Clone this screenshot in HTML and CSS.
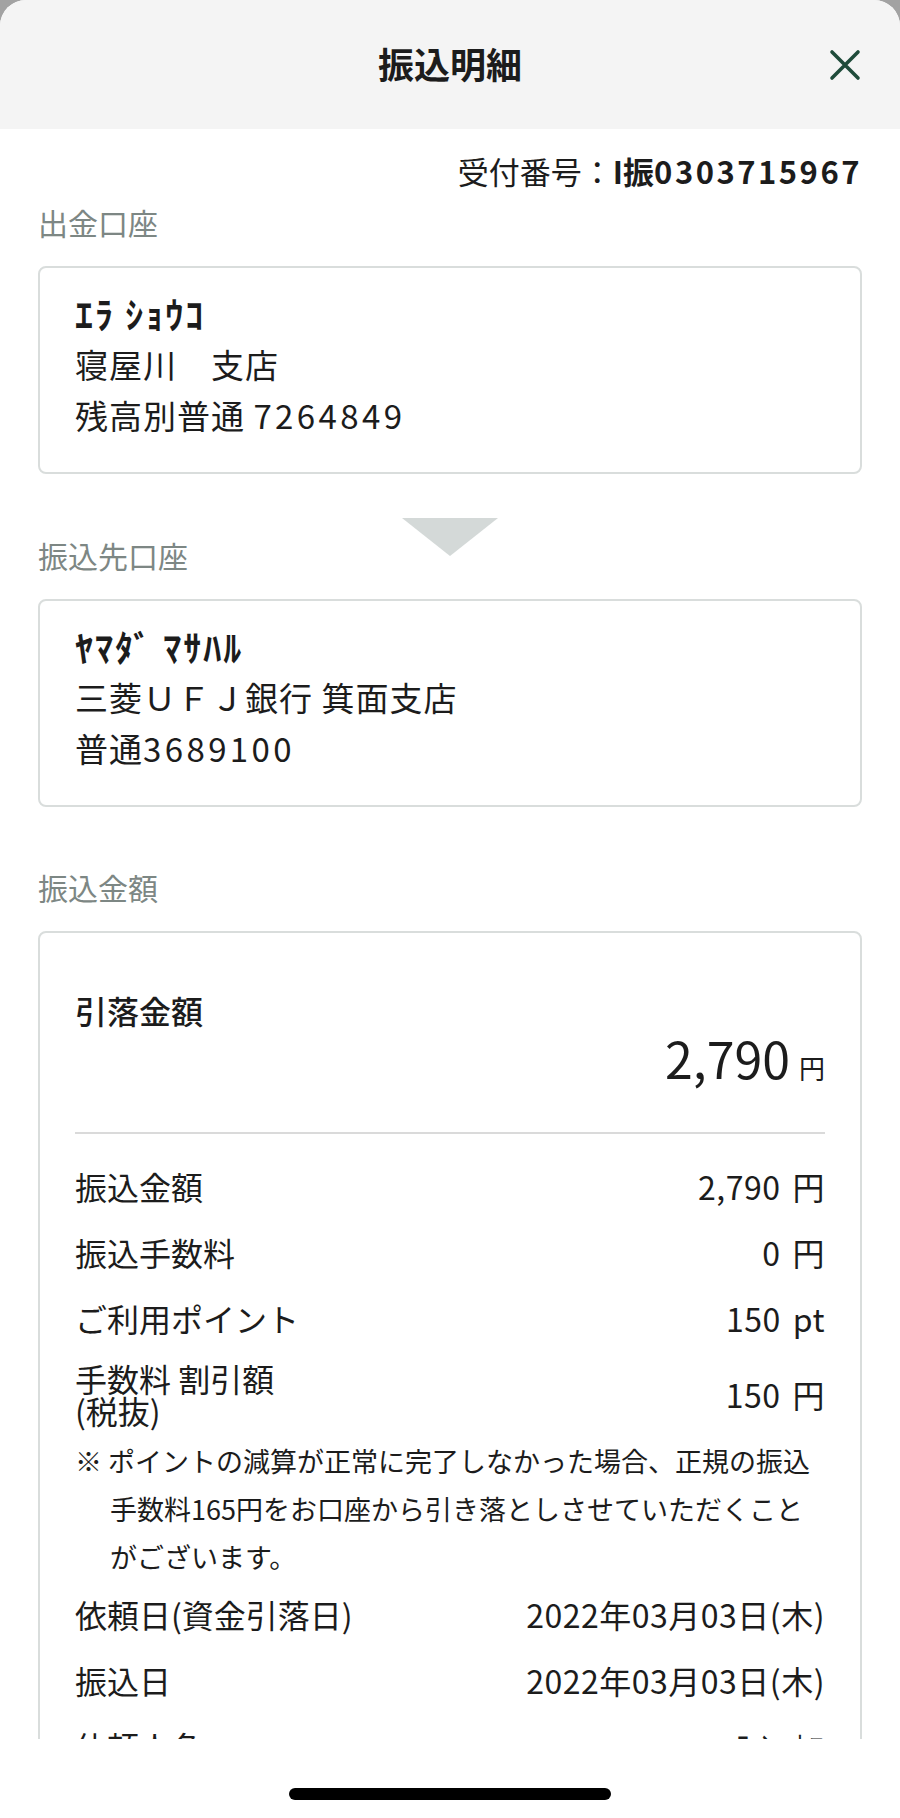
FILE: index.html
```html
<!DOCTYPE html>
<html lang="ja">
<head>
<meta charset="utf-8">
<title>振込明細</title>
<link rel="stylesheet" href="styles.css">
</head>
<body>
<div class="sheet">
  <header class="head">
    <h1 class="head-title">振込明細</h1>
    <button class="close" type="button" aria-label="閉じる">
      <svg width="32" height="32" viewBox="0 0 32 32"><path d="M3 3 L29 29 M29 3 L3 29" stroke="#1f4b3a" stroke-width="3.6" stroke-linecap="round" fill="none"/></svg>
    </button>
  </header>

  <main class="scroll">
    <p class="receipt">受付番号：<b class="receipt-no">I振<span class="num">0303715967</span></b></p>

    <section class="block">
      <h2 class="block-title">出金口座</h2>
      <div class="card account">
        <p class="acct-name">ｴﾗ ｼｮｳｺ</p>
        <p>寝屋川　支店</p>
        <p>残高別普通 <span class="num">7264849</span></p>
      </div>
    </section>

    <section class="block">
      <span class="arrow"></span>
      <h2 class="block-title">振込先口座</h2>
      <div class="card account">
        <p class="acct-name">ﾔﾏﾀﾞ ﾏｻﾊﾙ</p>
        <p>三菱ＵＦＪ銀行 箕面支店</p>
        <p>普通<span class="num">3689100</span></p>
      </div>
    </section>

    <section class="block">
      <h2 class="block-title">振込金額</h2>
      <div class="card amount-card">
        <p class="total-label">引落金額</p>
        <p class="total">2,790<span class="unit">円</span></p>
        <div class="divider"></div>
        <div class="rows">
          <div class="row"><span class="row-label">振込金額</span><span class="row-value">2,790<span class="unit">円</span></span></div>
          <div class="row"><span class="row-label">振込手数料</span><span class="row-value">0<span class="unit">円</span></span></div>
          <div class="row"><span class="row-label">ご利用ポイント</span><span class="row-value">150<span class="unit">pt</span></span></div>
          <div class="row"><span class="row-label two">手数料 割引額<br>(税抜)</span><span class="row-value">150<span class="unit">円</span></span></div>
          <p class="note">※ ポイントの減算が正常に完了しなかった場合、正規の振込手数料165円をお口座から引き落としさせていただくことがございます。</p>
          <div class="row"><span class="row-label">依頼日(資金引落日)</span><span class="row-value">2022年03月03日(木)</span></div>
          <div class="row"><span class="row-label">振込日</span><span class="row-value">2022年03月03日(木)</span></div>
          <div class="row"><span class="row-label">依頼人名</span><span class="row-value">ｴﾗ ｼｮｳｺ</span></div>
        </div>
      </div>
    </section>
  </main>

  <footer class="home">
    <span class="home-bar"></span>
  </footer>
</div>
</body>
</html>
```

FILE: styles.css
```css
* {
  box-sizing: border-box;
  margin: 0;
  padding: 0;
}

html {
  background: #a2a2a2;
}

body {
  margin: 0;
  font-family: "Noto Sans CJK JP", sans-serif;
  color: #1c1c1c;
}

.sheet {
  width: 900px;
  height: 1818px;
  background: #fff;
  border-radius: 26px 26px 0 0;
  overflow: hidden;
  display: flex;
  flex-direction: column;
}

.head {
  flex: none;
  height: 129px;
  background: #f4f4f4;
  display: grid;
  grid-template-columns: 1fr auto 1fr;
  align-items: center;
  padding: 0 39px;
}

.head-title {
  grid-column: 2;
  font-size: 36px;
  font-weight: 700;
  line-height: 44px;
  margin-bottom: 4px;
}

.close {
  grid-column: 3;
  justify-self: end;
  width: 32px;
  height: 32px;
  border: 0;
  background: none;
  display: block;
}

.close svg {
  display: block;
}

.scroll {
  flex: none;
  height: 1610px;
  overflow: hidden;
  padding: 0 38px;
}

.receipt {
  margin-top: 22px;
  text-align: right;
  font-size: 31px;
  line-height: 40px;
}

.receipt-no {
  font-weight: 700;
}

.receipt-no .num {
  letter-spacing: 2.5px;
}

.block {
  position: relative;
  margin-top: 11px;
}

.block + .block {
  margin-top: 60.5px;
}

.block-title {
  font-size: 30px;
  font-weight: 400;
  line-height: 40px;
  color: #7d8784;
  margin-bottom: 24px;
}

.card {
  border: 2px solid #d9dddc;
  border-radius: 8px;
  background: #fff;
}

.account {
  padding: 20px 35px 31px;
  font-size: 33px;
  line-height: 51px;
  letter-spacing: 1px;
}

.account .num {
  letter-spacing: 3.4px;
}

.acct-name {
  font-size: 36px;
  font-weight: 700;
  letter-spacing: 2px;
}

.arrow {
  position: absolute;
  top: -17px;
  left: 50%;
  margin-left: -48px;
  width: 0;
  height: 0;
  border-left: 48px solid transparent;
  border-right: 48px solid transparent;
  border-top: 38px solid #d4d9d8;
}

.amount-card {
  padding: 55px 35px 40px;
}

.total-label {
  font-size: 32px;
  line-height: 44px;
  font-weight: 500;
}

.total {
  text-align: right;
  font-size: 50px;
  line-height: 50px;
}

.total .unit {
  font-size: 26px;
  line-height: 1;
  margin-left: 9px;
}

.divider {
  margin-top: 50px;
  height: 2px;
  background: #dadada;
}

.rows {
  margin-top: 19px;
}

.row {
  display: flex;
  justify-content: space-between;
  align-items: center;
  padding: 11px 0;
  font-size: 32px;
  line-height: 44px;
}

.row-value {
  letter-spacing: 0.5px;
}

.row-label.two {
  line-height: 32px;
}

.row .unit {
  margin-left: 12px;
}

.note {
  font-size: 27px;
  line-height: 48px;
  padding-left: 35px;
  text-indent: -35px;
}

.home {
  flex: 1;
  display: flex;
  justify-content: center;
  padding-top: 49px;
}

.home-bar {
  width: 322px;
  height: 12px;
  border-radius: 6px;
  background: #000;
}
```
